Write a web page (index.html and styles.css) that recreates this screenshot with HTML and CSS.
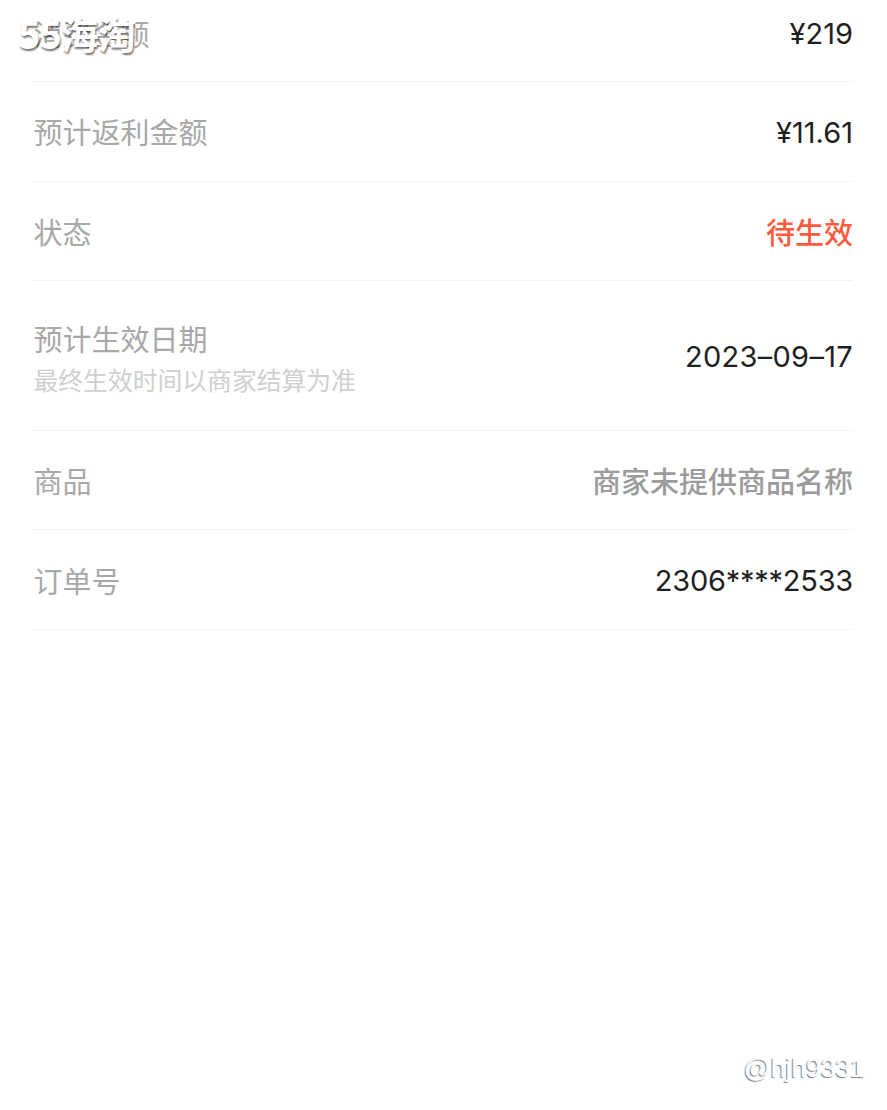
FILE: index.html
```html
<!DOCTYPE html>
<html lang="en">

<head>
    <meta charset="UTF-8">
    <meta name="viewport" content="width=device-width, initial-scale=1.0">
    <title>返利详情</title>
    <link rel="stylesheet" href="styles.css">
</head>

<body>
    <div class="list">
        <div class="row row-first">
            <span class="label">消费金额</span>
            <span class="value">¥219</span>
        </div>
        <div class="row">
            <span class="label">预计返利金额</span>
            <span class="value">¥11.61</span>
        </div>
        <div class="row">
            <span class="label">状态</span>
            <span class="value-red">待生效</span>
        </div>
        <div class="row row-tall">
            <div class="label-group">
                <span class="label">预计生效日期</span>
                <span class="hint">最终生效时间以商家结算为准</span>
            </div>
            <span class="value value-date">2023–09–17</span>
        </div>
        <div class="row">
            <span class="label">商品</span>
            <span class="value-gray">商家未提供商品名称</span>
        </div>
        <div class="row">
            <span class="label">订单号</span>
            <span class="value value-order">2306****2533</span>
        </div>
    </div>

    <!-- watermarks sit on top of the screenshot content -->
    <div class="mark-logo">55海淘</div>
    <div class="mark-user">@hjh9331</div>
</body>

</html>
```

FILE: styles.css
```css
html,
body {
    margin: 0;
    padding: 0;
    height: 100%;
    overflow: hidden;
    background-color: #fff;
}

body {
    position: relative;
    font-family: "Noto Sans CJK SC", sans-serif;
}

.list {
    padding: 0 34px 0 33.5px;
}

.row {
    display: flex;
    justify-content: space-between;
    align-items: center;
    box-sizing: border-box;
    height: 99.6px;
    border-bottom: 1px solid #f3f3f3;
}

.row-first {
    height: 82px;
    padding-bottom: 16px;
}

.row-tall {
    height: 149.5px;
}

.label-group {
    display: flex;
    flex-direction: column;
    gap: 6px;
    padding-top: 3px;
}

.label {
    font-size: 29px;
    line-height: 38px;
    color: #a8a8a8;
}

.hint {
    font-size: 24.8px;
    line-height: 32px;
    color: #cfcfcf;
}

.value {
    padding-top: 3px;
    font-family: "Inter", "Noto Sans CJK SC", sans-serif;
    font-size: 29px;
    line-height: 38px;
    color: #1f1f1f;
}

.value-date {
    letter-spacing: 0.3px;
}

.value-order {
    letter-spacing: -0.25px;
}

.value-red {
    font-size: 29px;
    line-height: 38px;
    font-weight: 500;
    color: #ff5a3f;
}

.value-gray {
    font-size: 29px;
    line-height: 38px;
    font-weight: 500;
    color: #9b9b9b;
}

.mark-logo {
    position: absolute;
    left: 18px;
    top: 11px;
    font-size: 38px;
    line-height: 44px;
    font-weight: 700;
    letter-spacing: -1px;
    color: #fff;
    text-shadow: 1px 2px 2px rgba(0, 0, 0, 0.55);
}

.mark-user {
    position: absolute;
    right: 22px;
    top: 1051px;
    font-family: "Liberation Sans", sans-serif;
    font-size: 26.5px;
    line-height: 34px;
    color: #fff;
    text-shadow: -1px 1px 1px rgba(0, 0, 0, 0.5);
}
```
